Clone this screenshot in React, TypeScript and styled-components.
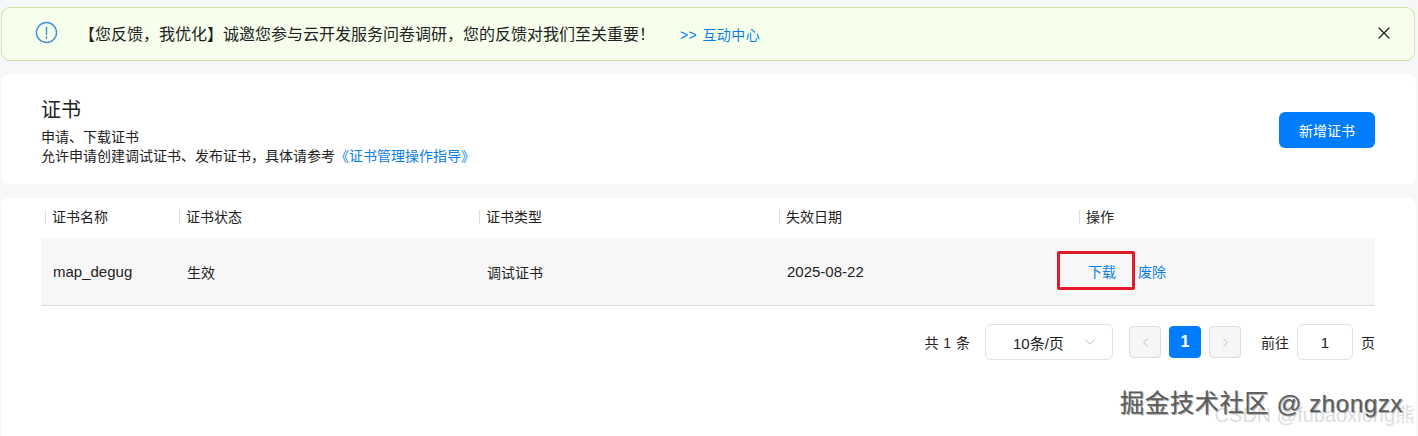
import styled, { createGlobalStyle } from "styled-components";
import { ChevronDown, ChevronLeft, ChevronRight, X } from "lucide-react";

const Global = createGlobalStyle`
  html, body {
    margin: 0;
    padding: 0;
    height: 436px;
    overflow: hidden;
    background: #f6f7f9;
    font-family: "Liberation Sans", "Noto Sans CJK SC", sans-serif;
    font-size: 14px;
    color: #222;
  }
`;

const Page = styled.div`
  position: relative;
  height: 436px;
  padding: 7px 2px 0 1px;
  box-sizing: border-box;
  overflow: hidden;
`;

const Notice = styled.div`
  height: 54px;
  box-sizing: border-box;
  margin-right: 1px;
  padding: 0 20px 0 33px;
  display: flex;
  align-items: center;
  background: #f6ffec;
  border: 1px solid #d3e3a8;
  border-radius: 9px;
`;

const NoticeIcon = styled.svg`
  width: 23px;
  height: 23px;
  margin-top: -3px;
  margin-right: 25px;
  flex: none;
`;

const NoticeText = styled.span`
  font-size: 16px;
  color: #222;
  margin-top: -2px;
  margin-left: -4px;
`;

const NoticeLink = styled.a`
  margin-left: 25px;
  margin-top: -1px;
  color: #0a7ee8;
  font-size: 14px;
  word-spacing: 1px;
  letter-spacing: 0.4px;
`;

const Close = styled.span`
  margin-left: auto;
  margin-top: -2px;
  display: flex;
  color: #222;
`;

const HeadCard = styled.section`
  margin-top: 13px;
  height: 110px;
  box-sizing: border-box;
  padding: 0 41px 0 40px;
  display: flex;
  align-items: center;
  justify-content: space-between;
  background: #fff;
  border-radius: 8px;
`;

const HeadText = styled.div`
  padding-top: 4px;
`;

const Title = styled.h1`
  margin: 0 0 5px;
  font-size: 20px;
  font-weight: 400;
  line-height: 26px;
  color: #222;
`;

const Desc = styled.p`
  margin: 0;
  font-size: 14px;
  line-height: 19px;
  color: #222;
`;

const Link = styled.a`
  color: #0a7ee8;
`;

const PrimaryButton = styled.button`
  width: 96px;
  height: 36px;
  margin-top: 1px;
  border: 0;
  border-radius: 6px;
  background: #007dff;
  color: #fff;
  font: inherit;
  font-size: 14px;
`;

const TableCard = styled.section`
  margin-top: 14px;
  height: 300px;
  padding: 0 41px 0 40px;
  background: #fff;
  border-radius: 8px 8px 0 0;
`;

const columns = "134px 300px 300px 300px 1fr";

const HeadRow = styled.div`
  display: grid;
  grid-template-columns: ${columns};
  height: 40px;
  align-items: center;
`;

const HeadCell = styled.div`
  position: relative;
  padding-left: 11px;
  margin-top: -2px;
  font-size: 14px;
  line-height: 16px;
  color: #222;
  &::before {
    content: "";
    position: absolute;
    left: 4px;
    top: 1px;
    bottom: 1px;
    width: 1px;
    background: #ddd;
  }
`;

const BodyRow = styled.div`
  display: grid;
  grid-template-columns: ${columns};
  height: 68px;
  box-sizing: border-box;
  align-items: center;
  background: #f7f7f7;
  border-bottom: 1px solid #dedede;
`;

const BodyCell = styled.div<{ $latin?: boolean }>`
  padding-left: 12px;
  font-size: ${(p) => (p.$latin ? "15px" : "14px")};
  color: #222;
`;

const Actions = styled.div`
  display: flex;
  align-items: center;
  padding-left: 13px;
  margin-top: -2px;
  font-size: 14px;
  color: #0a7ee8;
`;

const Marked = styled.span`
  position: relative;
  width: 28px;
  margin-right: 22px;
  &::after {
    content: "";
    position: absolute;
    left: -31px;
    right: -19px;
    top: -10px;
    bottom: -9px;
    border: 3px solid #e31c2c;
    border-radius: 2px;
  }
`;

const Pager = styled.div`
  display: flex;
  align-items: center;
  justify-content: flex-end;
  margin-top: 18px;
  font-size: 14px;
  color: #222;
`;

const Total = styled.span`
  margin-right: 15px;
  word-spacing: 1px;
`;

const Select = styled.div`
  width: 128px;
  height: 36px;
  box-sizing: border-box;
  padding: 0 13px 0 27px;
  display: flex;
  align-items: center;
  justify-content: space-between;
  border: 1px solid #e2e2e2;
  border-radius: 6px;
  margin-right: 16px;
  font-size: 15px;
`;

const PageButton = styled.span<{ $active?: boolean }>`
  width: 32px;
  height: 32px;
  box-sizing: border-box;
  display: flex;
  align-items: center;
  justify-content: center;
  border-radius: 4px;
  border: 1px solid ${(p) => (p.$active ? "#007dff" : "#dcdcdc")};
  background: ${(p) => (p.$active ? "#007dff" : "#f6f6f6")};
  color: ${(p) => (p.$active ? "#fff" : "#b5b5b5")};
  font-weight: ${(p) => (p.$active ? 700 : 400)};
  font-size: 16px;
  margin-right: 8px;
`;

const GoLabel = styled.span`
  margin-left: 12px;
  margin-right: 8px;
`;

const GoInput = styled.div`
  width: 56px;
  height: 36px;
  box-sizing: border-box;
  display: flex;
  align-items: center;
  justify-content: center;
  border: 1px solid #e2e2e2;
  border-radius: 6px;
  margin-right: 8px;
  font-size: 15px;
`;

const Mark = styled.div`
  position: absolute;
  right: 15px;
  top: 389px;
  font-size: 24.5px;
  line-height: 30px;
  letter-spacing: 0.4px;
  color: #5c5c5c;
  white-space: nowrap;
  text-shadow: 1px 1px 0 #aaa;
`;

const MarkFaint = styled.div`
  position: absolute;
  right: 3px;
  top: 401px;
  font-size: 20px;
  line-height: 28px;
  color: #ddd;
  white-space: nowrap;
`;

export default function App() {
  return (
    <Page>
      <Global />
      <Notice>
        <NoticeIcon viewBox="0 0 24 24" fill="none" stroke="#4a90d9" strokeWidth="1.5">
          <circle cx="12" cy="12" r="10.5" />
          <path d="M12 6.5v7.5M12 16.5v1.5" strokeLinecap="round" />
        </NoticeIcon>
        <NoticeText>【您反馈，我优化】诚邀您参与云开发服务问卷调研，您的反馈对我们至关重要！</NoticeText>
        <NoticeLink>&gt;&gt; 互动中心</NoticeLink>
        <Close>
          <X size={20} strokeWidth={1.5} />
        </Close>
      </Notice>

      <HeadCard>
        <HeadText>
          <Title>证书</Title>
          <Desc>申请、下载证书</Desc>
          <Desc>
            允许申请创建调试证书、发布证书，具体请参考<Link>《证书管理操作指导》</Link>
          </Desc>
        </HeadText>
        <PrimaryButton>新增证书</PrimaryButton>
      </HeadCard>

      <TableCard>
        <HeadRow>
          <HeadCell>证书名称</HeadCell>
          <HeadCell>证书状态</HeadCell>
          <HeadCell>证书类型</HeadCell>
          <HeadCell>失效日期</HeadCell>
          <HeadCell>操作</HeadCell>
        </HeadRow>
        <BodyRow>
          <BodyCell $latin>map_degug</BodyCell>
          <BodyCell>生效</BodyCell>
          <BodyCell>调试证书</BodyCell>
          <BodyCell $latin>2025-08-22</BodyCell>
          <Actions>
            <Marked>下载</Marked>
            <span>废除</span>
          </Actions>
        </BodyRow>
        <Pager>
          <Total>共 1 条</Total>
          <Select>
            <span>10条/页</span>
            <ChevronDown size={18} color="#bbb" strokeWidth={1.3} />
          </Select>
          <PageButton>
            <ChevronLeft size={15} strokeWidth={1.4} />
          </PageButton>
          <PageButton $active>1</PageButton>
          <PageButton>
            <ChevronRight size={15} strokeWidth={1.4} />
          </PageButton>
          <GoLabel>前往</GoLabel>
          <GoInput>1</GoInput>
          <span>页</span>
        </Pager>
      </TableCard>

      <MarkFaint>CSDN @fubaoxiong熊</MarkFaint>
      <Mark>掘金技术社区 @ zhongzx</Mark>
    </Page>
  );
}
